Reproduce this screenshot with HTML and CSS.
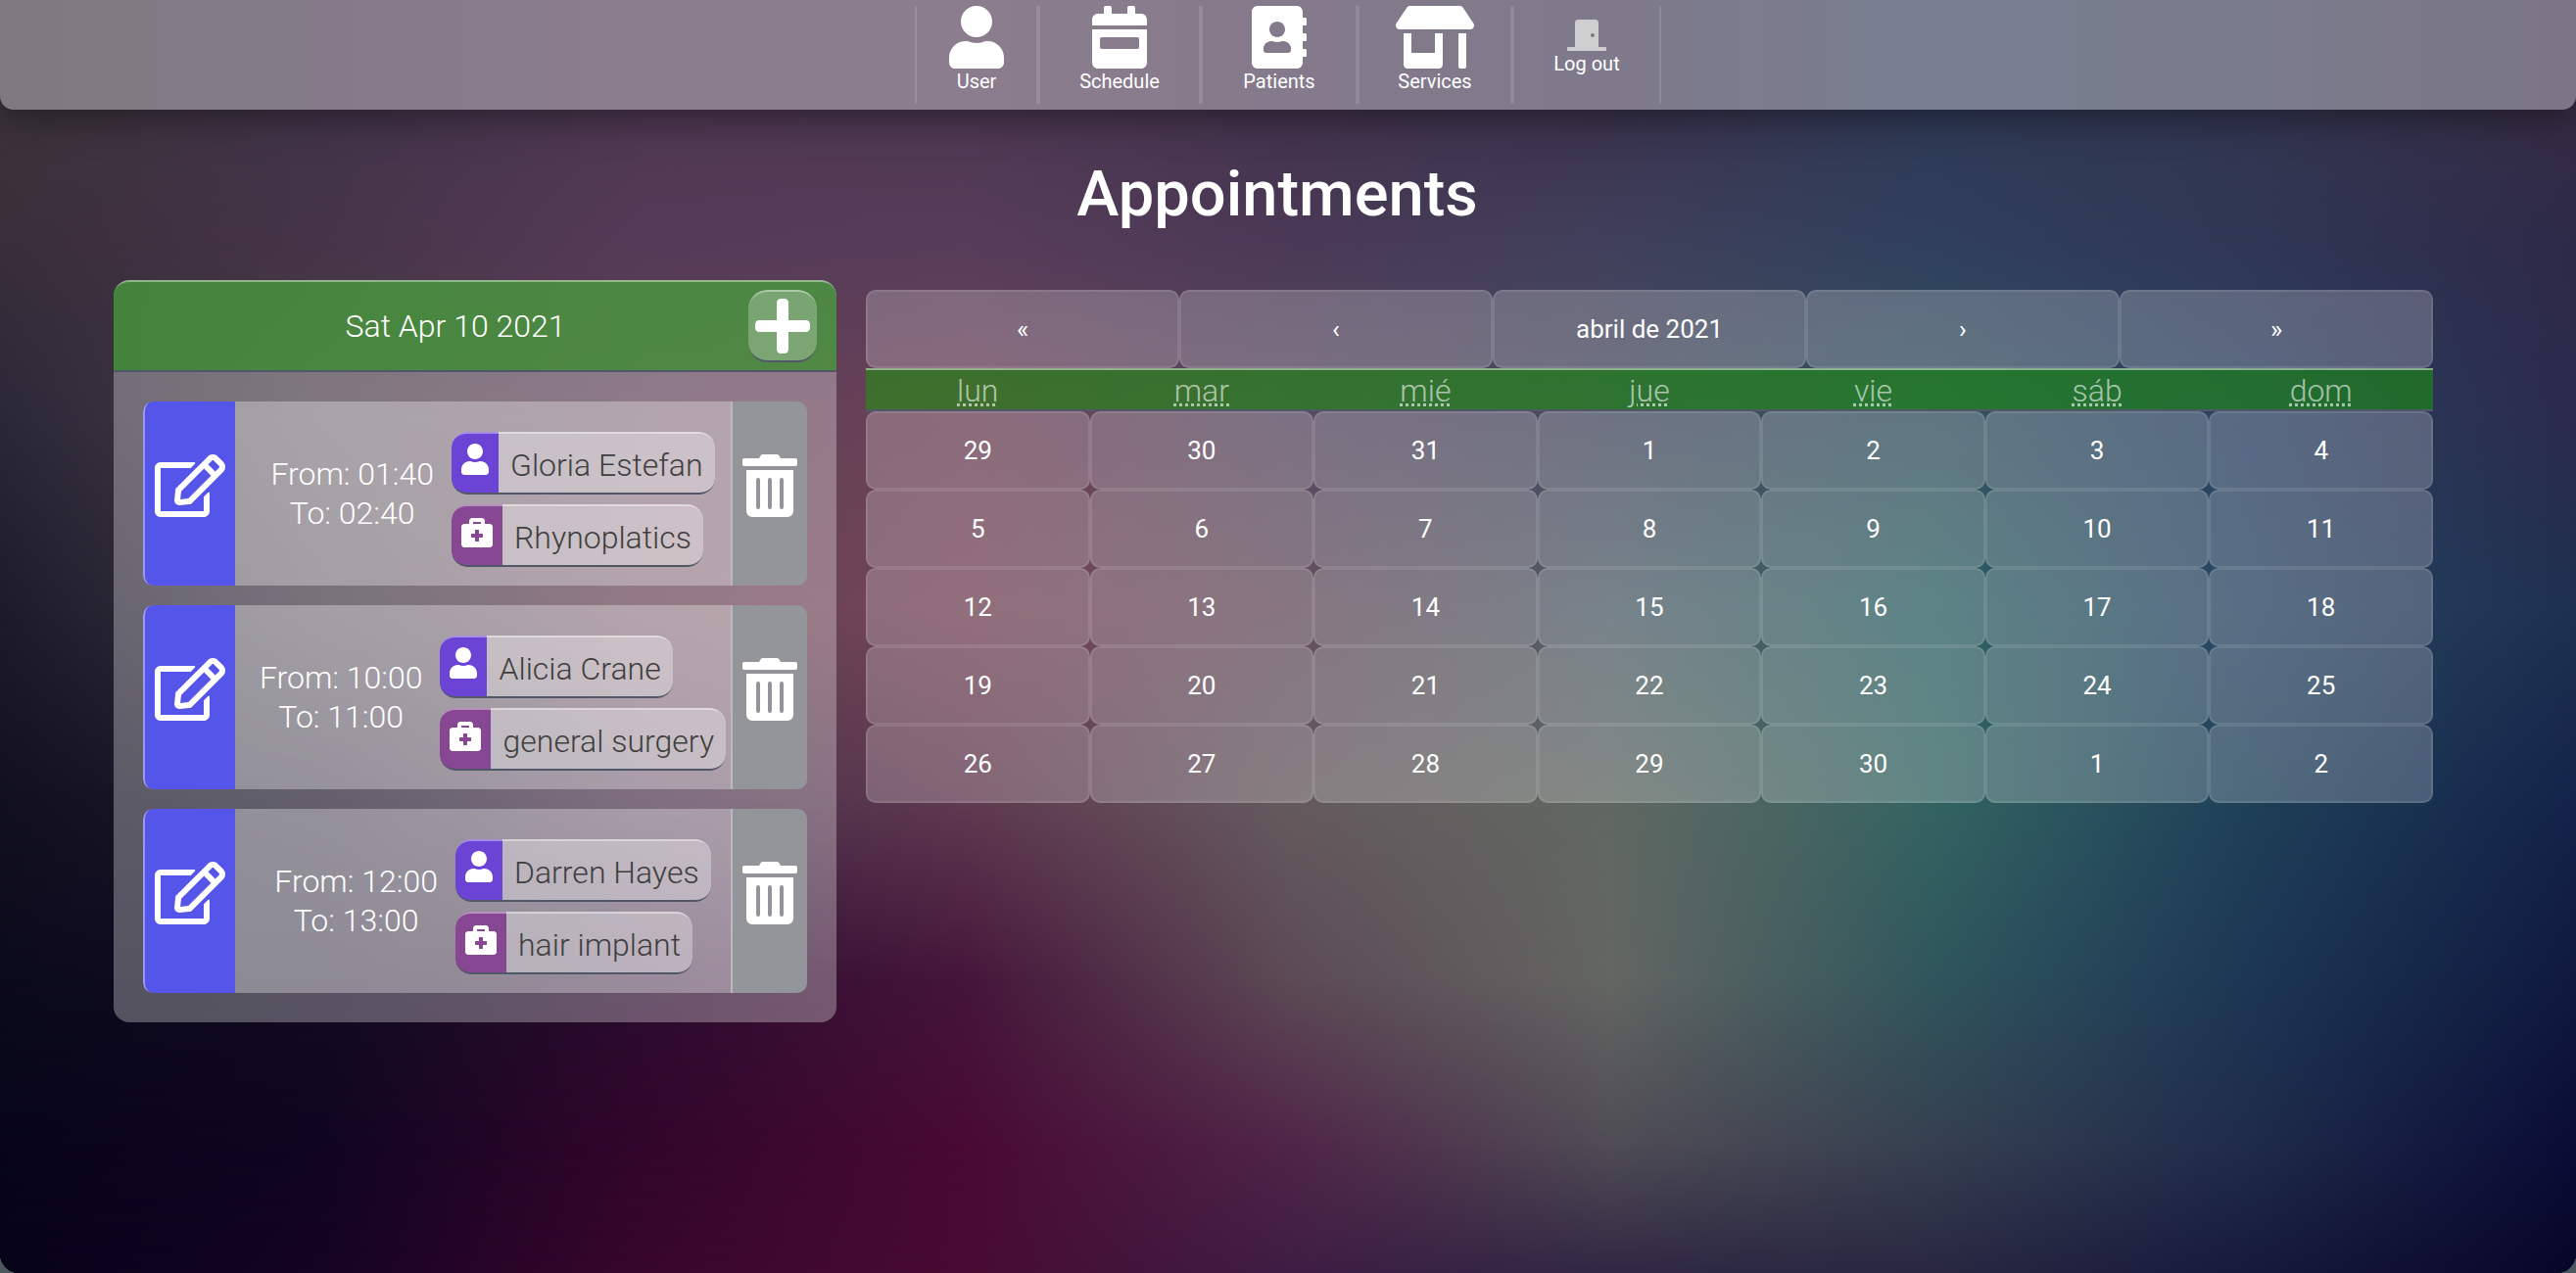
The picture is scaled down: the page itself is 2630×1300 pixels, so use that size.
FILE: index.html
```html
<!DOCTYPE html>
<html lang="en">
<head>
<meta charset="utf-8">
<title>Appointments</title>
<link rel="stylesheet" href="styles.css">
</head>
<body>
<svg class="sprite" aria-hidden="true">
  <symbol id="user" viewBox="0 0 448 512"><path d="M224 256c70.700 0 128-57.300 128-128S294.700 0 224 0 96 57.300 96 128s57.300 128 128 128zm89.600 32h-16.700c-22.200 10.200-46.900 16-72.900 16s-50.600-5.800-72.900-16h-16.700C60.200 288 0 348.200 0 422.400V464c0 26.500 21.500 48 48 48h352c26.500 0 48-21.500 48-48v-41.600c0-74.200-60.200-134.400-134.400-134.400z"/></symbol>
  <symbol id="calendar" viewBox="0 0 448 512"><path d="M0 464c0 26.500 21.500 48 48 48h352c26.500 0 48-21.500 48-48V192H0v272zm64-192c0-8.800 7.200-16 16-16h288c8.800 0 16 7.200 16 16v64c0 8.800-7.200 16-16 16H80c-8.800 0-16-7.200-16-16v-64zM400 64h-48V16c0-8.800-7.200-16-16-16h-32c-8.800 0-16 7.200-16 16v48H160V16c0-8.800-7.200-16-16-16h-32c-8.800 0-16 7.200-16 16v48H48C21.500 64 0 85.500 0 112v48h448v-48c0-26.500-21.500-48-48-48z"/></symbol>
  <symbol id="book" viewBox="0 0 448 512"><path d="M436 160c6.600 0 12-5.400 12-12v-40c0-6.600-5.400-12-12-12h-20V48c0-26.500-21.500-48-48-48H48C21.500 0 0 21.500 0 48v416c0 26.500 21.500 48 48 48h320c26.500 0 48-21.500 48-48v-48h20c6.600 0 12-5.400 12-12v-40c0-6.600-5.400-12-12-12h-20v-64h20c6.600 0 12-5.400 12-12v-40c0-6.600-5.400-12-12-12h-20v-64h20zm-228-32c35.300 0 64 28.700 64 64s-28.700 64-64 64-64-28.700-64-64 28.700-64 64-64zm112 236.800c0 10.600-10 19.200-22.400 19.200H118.400C106 384 96 375.400 96 364.800v-19.200c0-31.800 30.100-57.600 67.200-57.600h5c12.300 5.100 25.700 8 39.800 8s27.600-2.900 39.800-8h5c37.100 0 67.200 25.800 67.200 57.600v19.200z"/></symbol>
  <symbol id="store" viewBox="0 0 640 512"><path d="M320 384H128V224H64v256c0 17.700 14.300 32 32 32h256c17.700 0 32-14.300 32-32V224h-64v160zm314.600-241.800l-85.300-128c-6-8.900-16-14.200-26.700-14.200H117.400c-10.700 0-20.700 5.300-26.600 14.200l-85.300 128c-14.200 21.300 1 49.800 26.600 49.800H608c25.500 0 40.700-28.500 26.600-49.800zM512 496c0 8.800 7.200 16 16 16h32c8.800 0 16-7.200 16-16V224h-64v272z"/></symbol>
  <symbol id="door" viewBox="0 0 640 512"><path d="M624 448H512V50.800C512 22.800 490.500 0 464 0H175.700C149.200 0 128 22.800 128 50.800V448H16c-8.800 0-16 7.200-16 16v32c0 8.800 7.200 16 16 16h608c8.800 0 16-7.200 16-16v-32c0-8.800-7.200-16-16-16zM415.500 288c-17.700 0-32-14.300-32-32s14.300-32 32-32 32 14.300 32 32-14.300 32-32 32z"/></symbol>
  <symbol id="plus" viewBox="0 0 448 512"><path d="M416 208H272V64c0-17.700-14.300-32-32-32h-32c-17.700 0-32 14.300-32 32v144H32c-17.700 0-32 14.300-32 32v32c0 17.700 14.300 32 32 32h144v144c0 17.700 14.300 32 32 32h32c17.700 0 32-14.300 32-32V304h144c17.700 0 32-14.300 32-32v-32c0-17.700-14.300-32-32-32z"/></symbol>
  <symbol id="edit" viewBox="0 0 576 512"><path d="M402.300 344.900l32-32c5-5 13.700-1.500 13.700 5.700V464c0 26.500-21.500 48-48 48H48c-26.500 0-48-21.500-48-48V112c0-26.500 21.500-48 48-48h273.500c7.100 0 10.700 8.600 5.700 13.700l-32 32c-1.500 1.500-3.500 2.300-5.700 2.300H48v352h352V350.500c0-2.100.8-4.100 2.300-5.600zm156.600-201.800L296.300 405.700l-90.400 10c-26.200 2.900-48.500-19.200-45.600-45.600l10-90.400L432.900 17.100c22.900-22.900 59.900-22.900 82.700 0l43.200 43.200c22.900 22.900 22.900 60 .1 82.800zM460.100 174L402 115.900 216.200 301.800l-7.300 65.300 65.300-7.300L460.100 174zm64.800-79.700l-43.200-43.200c-4.100-4.100-10.800-4.100-14.800 0L436 82l58.100 58.100 30.900-30.900c4-4.200 4-10.800-.1-14.900z"/></symbol>
  <symbol id="trash" viewBox="0 0 448 512"><path d="M32 464a48 48 0 0 0 48 48h288a48 48 0 0 0 48-48V128H32zm272-256a16 16 0 0 1 32 0v224a16 16 0 0 1-32 0zm-96 0a16 16 0 0 1 32 0v224a16 16 0 0 1-32 0zm-96 0a16 16 0 0 1 32 0v224a16 16 0 0 1-32 0zM432 32H312l-9.400-18.700A24 24 0 0 0 281.100 0H166.800a23.700 23.700 0 0 0-21.400 13.300L136 32H16A16 16 0 0 0 0 48v32a16 16 0 0 0 16 16h416a16 16 0 0 0 16-16V48a16 16 0 0 0-16-16z"/></symbol>
  <symbol id="medical" viewBox="0 0 512 512"><path d="M464 128h-80V80c0-26.500-21.500-48-48-48H176c-26.500 0-48 21.500-48 48v48H48c-26.500 0-48 21.500-48 48v288c0 26.500 21.500 48 48 48h416c26.500 0 48-21.500 48-48V176c0-26.500-21.500-48-48-48zM192 96h128v32H192V96zm160 248c0 4.400-3.600 8-8 8h-56v56c0 4.400-3.600 8-8 8h-48c-4.400 0-8-3.600-8-8v-56h-56c-4.400 0-8-3.600-8-8v-48c0-4.400 3.600-8 8-8h56v-56c0-4.400 3.600-8 8-8h48c4.400 0 8 3.600 8 8v56h56c4.400 0 8 3.600 8 8v48z"/></symbol>
</svg>

<div class="app">
  <div class="backdrop" aria-hidden="true">
    <div class="band band-1"></div>
    <div class="band band-2"></div>
    <div class="band band-3"></div>
    <div class="band band-4"></div>
    <div class="band band-5"></div>
    <div class="band band-6"></div>
    <div class="band band-7"></div>
    <div class="band band-8"></div>
  </div>

  <header class="topbar">
    <nav class="nav">
      <a class="nav-item" href="#"><svg class="icon-narrow"><use href="#user"/></svg>User</a>
      <a class="nav-item" href="#"><svg class="icon-narrow"><use href="#calendar"/></svg>Schedule</a>
      <a class="nav-item" href="#"><svg class="icon-narrow"><use href="#book"/></svg>Patients</a>
      <a class="nav-item" href="#"><svg class="icon-wide"><use href="#store"/></svg>Services</a>
      <a class="nav-item nav-logout" href="#"><svg class="icon-door"><use href="#door"/></svg>Log out</a>
    </nav>
  </header>

  <main class="main">
    <h1 class="title">Appointments</h1>
    <div class="layout">
      <section class="day">
        <header class="day-head">
          <h2 class="day-date">Sat Apr 10 2021</h2>
          <button class="add" type="button" aria-label="Add appointment"><svg class="icon-narrow"><use href="#plus"/></svg></button>
        </header>
        <ul class="list">
          <li class="row">
            <button class="edit" type="button" aria-label="Edit"><svg class="icon-edit"><use href="#edit"/></svg></button>
            <div class="info">
              <p class="time">From: 01:40<br>To: 02:40</p>
              <div class="tags">
                <div class="tag"><span class="tag-icon person"><svg class="icon-person"><use href="#user"/></svg></span><span class="tag-text">Gloria Estefan</span></div>
                <div class="tag"><span class="tag-icon service"><svg class="icon-service"><use href="#medical"/></svg></span><span class="tag-text">Rhynoplatics</span></div>
              </div>
            </div>
            <button class="delete" type="button" aria-label="Delete"><svg class="icon-narrow"><use href="#trash"/></svg></button>
          </li>
          <li class="row">
            <button class="edit" type="button" aria-label="Edit"><svg class="icon-edit"><use href="#edit"/></svg></button>
            <div class="info">
              <p class="time">From: 10:00<br>To: 11:00</p>
              <div class="tags">
                <div class="tag"><span class="tag-icon person"><svg class="icon-person"><use href="#user"/></svg></span><span class="tag-text">Alicia Crane</span></div>
                <div class="tag"><span class="tag-icon service"><svg class="icon-service"><use href="#medical"/></svg></span><span class="tag-text">general surgery</span></div>
              </div>
            </div>
            <button class="delete" type="button" aria-label="Delete"><svg class="icon-narrow"><use href="#trash"/></svg></button>
          </li>
          <li class="row">
            <button class="edit" type="button" aria-label="Edit"><svg class="icon-edit"><use href="#edit"/></svg></button>
            <div class="info">
              <p class="time">From: 12:00<br>To: 13:00</p>
              <div class="tags">
                <div class="tag"><span class="tag-icon person"><svg class="icon-person"><use href="#user"/></svg></span><span class="tag-text">Darren Hayes</span></div>
                <div class="tag"><span class="tag-icon service"><svg class="icon-service"><use href="#medical"/></svg></span><span class="tag-text">hair implant</span></div>
              </div>
            </div>
            <button class="delete" type="button" aria-label="Delete"><svg class="icon-narrow"><use href="#trash"/></svg></button>
          </li>
        </ul>
      </section>

      <section class="calendar">
        <div class="cal-nav">
          <button class="cell" type="button">«</button>
          <button class="cell" type="button">‹</button>
          <button class="cell" type="button">abril de 2021</button>
          <button class="cell" type="button">›</button>
          <button class="cell" type="button">»</button>
        </div>
        <table class="month">
          <thead>
            <tr>
              <th><abbr title="lunes">lun</abbr></th>
              <th><abbr title="martes">mar</abbr></th>
              <th><abbr title="miércoles">mié</abbr></th>
              <th><abbr title="jueves">jue</abbr></th>
              <th><abbr title="viernes">vie</abbr></th>
              <th><abbr title="sábado">sáb</abbr></th>
              <th><abbr title="domingo">dom</abbr></th>
            </tr>
          </thead>
          <tbody>
            <tr><td><button class="cell" type="button">29</button></td><td><button class="cell" type="button">30</button></td><td><button class="cell" type="button">31</button></td><td><button class="cell" type="button">1</button></td><td><button class="cell" type="button">2</button></td><td><button class="cell" type="button">3</button></td><td><button class="cell" type="button">4</button></td></tr>
            <tr><td><button class="cell" type="button">5</button></td><td><button class="cell" type="button">6</button></td><td><button class="cell" type="button">7</button></td><td><button class="cell" type="button">8</button></td><td><button class="cell" type="button">9</button></td><td><button class="cell" type="button">10</button></td><td><button class="cell" type="button">11</button></td></tr>
            <tr><td><button class="cell" type="button">12</button></td><td><button class="cell" type="button">13</button></td><td><button class="cell" type="button">14</button></td><td><button class="cell" type="button">15</button></td><td><button class="cell" type="button">16</button></td><td><button class="cell" type="button">17</button></td><td><button class="cell" type="button">18</button></td></tr>
            <tr><td><button class="cell" type="button">19</button></td><td><button class="cell" type="button">20</button></td><td><button class="cell" type="button">21</button></td><td><button class="cell" type="button">22</button></td><td><button class="cell" type="button">23</button></td><td><button class="cell" type="button">24</button></td><td><button class="cell" type="button">25</button></td></tr>
            <tr><td><button class="cell" type="button">26</button></td><td><button class="cell" type="button">27</button></td><td><button class="cell" type="button">28</button></td><td><button class="cell" type="button">29</button></td><td><button class="cell" type="button">30</button></td><td><button class="cell" type="button">1</button></td><td><button class="cell" type="button">2</button></td></tr>
          </tbody>
        </table>
      </section>
    </div>
  </main>
</div>
</body>
</html>
```

FILE: styles.css
```css
* {
  box-sizing: border-box;
}

body {
  margin: 0;
  background: #4d585e;
  color: #fff;
  font-family: Roboto, "Liberation Sans", sans-serif;
  font-size: 32px;
  font-weight: 300;
  line-height: 40px;
}

button {
  margin: 0;
  padding: 0;
  border: 0;
  background: none;
  color: inherit;
  font: inherit;
  cursor: pointer;
}

svg {
  display: block;
  fill: currentColor;
}

.sprite {
  display: none;
}

.app {
  position: relative;
  isolation: isolate;
  min-height: 100vh;
  overflow: hidden;
  border-radius: 0 0 20px 20px;
}

/* Colour field: each band fades in over the one above it */
.backdrop {
  position: absolute;
  inset: 0;
  z-index: -1;
}

.band {
  position: absolute;
  inset: 0;
}

.band-1 {
  background: linear-gradient(90deg, #3c333a, #42344a, #4f3852, #4e3852, #43334d, #3a334d, #2f3a55, #323650, #352c44);
}

.band-2 {
  background: linear-gradient(90deg, #3a2e3a, #463448, #553b58, #573d5a, #4b3956, #40405a, #30405c, #303754, #2d2a48);
  mask-image: linear-gradient(transparent 9%, #000 19%);
}

.band-3 {
  background: linear-gradient(90deg, #2a2838, #4a3e48, #5f4056, #6c4258, #584a60, #464c60, #34525f, #2a4060, #2b2b4c);
  mask-image: linear-gradient(transparent 19%, #000 33%);
}

.band-4 {
  background: linear-gradient(90deg, #1d1b2b, #3c3642, #64404f, #744758, #66505e, #52606a, #2f6264, #2a4562, #1e3050);
  mask-image: linear-gradient(transparent 33%, #000 48%);
}

.band-5 {
  background: linear-gradient(90deg, #11101f, #201a2e, #48304a, #5f3a50, #655a5e, #606862, #346462, #1e4058, #14234a);
  mask-image: linear-gradient(transparent 48%, #000 63%);
}

.band-6 {
  background: linear-gradient(90deg, #0b0a1c, #100b20, #2a0c2e, #45153a, #5c4a55, #636662, #2f565c, #1c3654, #10193f);
  mask-image: linear-gradient(transparent 63%, #000 77%);
}

.band-7 {
  background: linear-gradient(90deg, #07051a, #100520, #32062b, #480a34, #4f2548, #4f4c55, #364050, #1f2b4a, #0a0c36);
  mask-image: linear-gradient(transparent 77%, #000 90%);
}

.band-8 {
  background: linear-gradient(90deg, #06031a, #150322, #38062c, #480b33, #3e1d42, #302843, #282840, #16193c, #070628);
  mask-image: linear-gradient(transparent 90%, #000 100%);
}

/* Top navigation */
.topbar {
  display: flex;
  justify-content: center;
  height: 112px;
  padding: 6px 0;
  border-radius: 0 0 14px 14px;
  background: rgba(255, 255, 255, .35);
  box-shadow: 0 4px 40px rgba(0, 0, 0, .5);
}

.nav {
  display: grid;
  grid-template-columns: 126px 166px 160px 158px 152px;
}

.nav-item {
  display: flex;
  flex-direction: column;
  align-items: center;
  border: solid rgba(255, 255, 255, .12);
  border-width: 0 2px;
  color: #fff;
  font-size: 20px;
  font-weight: 400;
  line-height: 26px;
  text-decoration: none;
}

.nav-logout {
  padding-top: 14px;
}

.icon-narrow {
  width: 56px;
  height: 64px;
}

.icon-wide {
  width: 80px;
  height: 64px;
}

.icon-door {
  width: 40px;
  height: 32px;
  color: #cfcfcf;
}

.icon-edit {
  width: 72px;
  height: 64px;
}

.icon-person {
  width: 28px;
  height: 32px;
}

.icon-service {
  width: 32px;
  height: 32px;
}

/* Page */
.main {
  padding: 44px 146px 40px 116px;
}

.title {
  margin: 0;
  padding: 2px 0 48px 8px;
  font-size: 65px;
  font-weight: 500;
  line-height: 80px;
  text-align: center;
}

.layout {
  display: grid;
  grid-template-columns: 738fr 1600fr;
  gap: 30px;
  align-items: start;
}

/* Day panel */
.day {
  overflow: hidden;
  border-radius: 16px;
  background: rgba(255, 255, 255, .3);
}

.day-head {
  display: flex;
  align-items: center;
  height: 94px;
  padding: 0 20px 0 50px;
  border-top: 2px solid rgba(255, 255, 255, .4);
  border-bottom: 2px solid #4f5769;
  border-radius: 16px 16px 0 0;
  background: rgba(27, 150, 11, .55);
}

.day-date {
  flex: 1;
  margin: 0;
  font-size: 32px;
  font-weight: 300;
  text-align: center;
}

.add {
  display: grid;
  place-items: center;
  width: 70px;
  height: 74px;
  border-top: 2px solid rgba(255, 255, 255, .4);
  border-bottom: 2px solid #4f5769;
  border-radius: 20px;
  background: rgba(255, 255, 255, .25);
}

.list {
  display: grid;
  gap: 20px;
  margin: 0;
  padding: 30px;
  list-style: none;
}

.row {
  display: flex;
  height: 188px;
  overflow: hidden;
  border-radius: 10px;
}

.edit,
.delete {
  display: grid;
  align-items: start;
  justify-items: center;
  padding-top: 54px;
}

.edit {
  width: 94px;
  border-left: 2px solid rgba(255, 255, 255, .4);
  border-radius: 10px 0 0 10px;
  background: #5555ea;
}

.delete {
  width: 78px;
  border-left: 2px solid #bab9be;
  background: #94959b;
}

.info {
  flex: 1;
  display: flex;
  justify-content: center;
  align-items: center;
  background: rgba(255, 255, 255, .32);
}

.time {
  margin: 0 18px 0 20px;
  text-align: center;
  white-space: nowrap;
}

.tags {
  display: grid;
  justify-items: start;
  gap: 10px;
  padding-top: 12px;
}

.tag {
  display: flex;
  height: 64px;
  overflow: hidden;
  border-radius: 16px;
  white-space: nowrap;
}

.tag-icon,
.tag-text {
  padding: 10px;
  border-top: 2px solid rgba(255, 255, 255, .4);
  border-bottom: 2px solid #4f5769;
}

.tag-icon {
  border-radius: 16px 0 0 16px;
}

.tag-text {
  padding: 12px 12px 8px;
  border-radius: 0 16px 16px 0;
  background: rgba(255, 255, 255, .32);
  color: #3f3f3f;
}

.person {
  background: #6b44d6;
}

.service {
  background: #874792;
}

/* Calendar */
.calendar {
  padding-top: 10px;
}

.cal-nav {
  display: grid;
  grid-template-columns: repeat(5, 1fr);
}

.cell {
  display: block;
  width: 100%;
  height: 80px;
  border: 2px solid rgba(255, 255, 255, .1);
  border-radius: 10px;
  background: rgba(255, 255, 255, .22);
  font-size: 26px;
  font-weight: 400;
}

.month {
  width: 100%;
  border-spacing: 0;
  table-layout: fixed;
}

.month th {
  height: 44px;
  padding: 2px 0 0;
  border-top: 2px solid rgba(255, 255, 255, .45);
  border-bottom: 2px solid #4f5769;
  background: rgba(27, 150, 11, .55);
  color: rgba(255, 255, 255, .6);
  font-weight: 300;
  line-height: 38px;
}

.month abbr {
  text-decoration: underline dotted;
}

.month td {
  padding: 0;
}
```
